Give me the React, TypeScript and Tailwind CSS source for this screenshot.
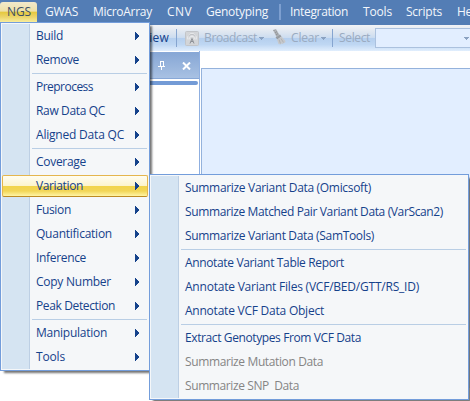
import React from "react";

type Entry = { t: string; w: number; sub?: boolean; on?: boolean; off?: boolean } | null;

const mainMenu: Entry[] = [
  { t: "Build", w: 27, sub: true },
  { t: "Remove", w: 43, sub: true },
  null,
  { t: "Preprocess", w: 57, sub: true },
  { t: "Raw Data QC", w: 69, sub: true },
  { t: "Aligned Data QC", w: 88, sub: true },
  null,
  { t: "Coverage", w: 50, sub: true },
  { t: "Variation", w: 47, sub: true, on: true },
  { t: "Fusion", w: 35, sub: true },
  { t: "Quantification", w: 76, sub: true },
  { t: "Inference", w: 50, sub: true },
  { t: "Copy Number", w: 75, sub: true },
  { t: "Peak Detection", w: 79, sub: true },
  null,
  { t: "Manipulation", w: 71, sub: true },
  { t: "Tools", w: 29, sub: true },
];

const variationMenu: Entry[] = [
  { t: "Summarize Variant Data (Omicsoft)", w: 186 },
  { t: "Summarize Matched Pair Variant Data (VarScan2)", w: 258 },
  { t: "Summarize Variant Data (SamTools)", w: 189 },
  null,
  { t: "Annotate Variant Table Report", w: 159 },
  { t: "Annotate Variant Files (VCF/BED/GTT/RS_ID)", w: 234 },
  { t: "Annotate VCF Data Object", w: 139 },
  null,
  { t: "Extract Genotypes From VCF Data", w: 176 },
  { t: "Summarize Mutation Data", w: 138, off: true },
  { t: "Summarize SNP  Data", w: 114, off: true },
];

/* Text fitted to a fixed advance width. */
function Label({ t, w }: { t: string; w: number }) {
  const ref = React.useRef<HTMLSpanElement>(null);
  const [gap, setGap] = React.useState(0);
  React.useLayoutEffect(() => {
    const fit = () => {
      const el = ref.current;
      if (!el) return;
      el.style.letterSpacing = "0px";
      const g = (w - el.getBoundingClientRect().width) / t.length;
      el.style.letterSpacing = g + "px";
      setGap(g);
    };
    fit();
    document.fonts?.ready.then(fit);
  }, [t, w]);
  return (
    <span ref={ref} className="inline-block whitespace-pre" style={{ letterSpacing: gap }}>
      {t}
    </span>
  );
}

function Menu({ entries }: { entries: Entry[] }) {
  return (
    <div className="border border-[#739ddb] bg-[#f5f7f9] p-px shadow-[3px_3px_2px_-1px_rgba(0,0,0,0.55)]">
      <div className="bg-[linear-gradient(90deg,#d5e4f2_27px,#bdcfe4_27px,#bdcfe4_28px,transparent_28px)] px-px">
        {entries.map((e, i) =>
          e === null ? (
            <div key={i} className="ml-[29px] flex h-[3px] items-center">
              <div className="h-px w-full bg-[#b9cee5]" />
            </div>
          ) : (
            <div
              key={i}
              className={
                "relative flex h-6 items-center justify-between pr-2 pl-[33px] leading-6 " +
                (e.off ? "text-[#858585]" : "text-[#15428b]")
              }
            >
              {e.on && (
                <div className="absolute inset-x-[-1px] top-px bottom-px rounded-[2px] border border-[#e5b64d] border-b-[#bd8b22] bg-[linear-gradient(180deg,#fffdf2_0%,#fcf4cd_48%,#f2d44b_52%,#f2d657_75%,#fff5a5_100%)]" />
              )}
              <span className="relative">
                <Label t={e.t} w={e.w} />
              </span>
              {e.sub && (
                <svg className="relative" width="4" height="8" viewBox="0 0 4 8" fill="#15428b" shapeRendering="crispEdges">
                  <path d="M0 0h1v1h1v1h1v1h1v2h-1v1h-1v1h-1v1h-1z" />
                </svg>
              )}
            </div>
          ),
        )}
      </div>
    </div>
  );
}

const bar = [
  { t: "GWAS", w: 33, c: "ml-[8px]" },
  { t: "MicroArray", w: 59, c: "ml-[15px]" },
  { t: "CNV", w: 25, c: "ml-[15px]" },
  { t: "Genotyping", w: 62, c: "ml-[14px]" },
  { t: "", w: 0, c: "" },
  { t: "Integration", w: 58, c: "ml-[9px]" },
  { t: "Tools", w: 29, c: "ml-[15px]" },
  { t: "Scripts", w: 36, c: "ml-[14px]" },
  { t: "Help", w: 25, c: "ml-[15px]" },
];

function Caret() {
  return (
    <svg className="shrink-0" width="5" height="3" viewBox="0 0 5 3" fill="#8ba2c1" shapeRendering="crispEdges">
      <path d="M0 0h5v1h-1v1h-1v1h-1v-1h-1v-1h-1z" />
    </svg>
  );
}

export default function App() {
  return (
    <div className="relative flex h-[401px] w-[470px] flex-col overflow-hidden bg-white font-['Open_Sans','Noto_Sans',sans-serif] text-[12px] leading-4">
      <div className="flex h-[25px] shrink-0 bg-[#537db5] text-[#f3f7fc]">
        <div className="mt-[2px] flex h-5 w-[37px] shrink-0 items-center rounded-t-[3px] bg-[linear-gradient(180deg,#f1e9cc_0%,#eee1a9_45%,#e6c940_52%,#ecd56a_75%,#f8ed9d_100%)] pl-[7px] text-[#3c4f66]">
          <Label t="NGS" w={24} />
        </div>
        {bar.map((b, i) =>
          b.t ? (
            <span key={i} className={"mt-[4px] shrink-0 " + b.c}>
              <Label t={b.t} w={b.w} />
            </span>
          ) : (
            <span key={i} className="mt-[4px] ml-[11px] h-4 w-[2px] shrink-0 bg-[#7d9fd0]" />
          ),
        )}
      </div>

      <div className="flex h-[26px] shrink-0 items-center bg-[linear-gradient(180deg,#f1f3f6_0%,#dce5f0_30%,#cbdcf0_49%,#b5cfee_51%,#bfd7f3_75%,#e1eefd_100%)] pl-[142px] text-[#9aabc1]">
        <span className="shrink-0 text-[#15428b]"><Label t="View" w={27} /></span>
        <span className="ml-[7px] h-[18px] w-px shrink-0 bg-[#86a5d0]" />
        <svg className="ml-[8px] shrink-0" width="14" height="15" viewBox="0 0 14 15" fill="none">
          <rect x="0.5" y="0.5" width="13" height="14" rx="1" fill="#d3d5d8" stroke="#c2c5c9" />
          <path d="M3 8.5a4.3 4.3 0 1 1 8 0M5 8.5a2.3 2.3 0 1 1 4 0" stroke="#f0f1f3" />
          <path d="M3.2 5.2a4.8 4.8 0 0 1 7.6 0" stroke="#b3b6ba" strokeWidth=".7" />
          <path d="M5 12.5l2-5 2 5M6 10.5h2" stroke="#8c9096" />
        </svg>
        <span className="ml-[5px] shrink-0"><Label t="Broadcast" w={53} /></span>
        <span className="ml-[2px] flex shrink-0"><Caret /></span>
        <svg className="-mt-[2px] ml-[8px] shrink-0" width="14" height="16" viewBox="0 0 14 16">
          <path d="M1 1l3-1 3.5 6-3 2z" fill="#aeb1b5" />
          <path d="M1.5 2l1-1M3 4l2-1.5M4 6l2-1.5" stroke="#898d92" strokeWidth=".8" />
          <path d="M3.5 8.5l4.5-3 1.5 2-4 3z" fill="#989ca1" />
          <path d="M5 10.5l4.5-3 4 4.5-.5 2-2-.5.5 1.5-3-.5.5 1-2.500-.5z" fill="#c6c8cb" />
          <path d="M7 10.500l1.500 4M9 9.500l2.500 4" stroke="#a5a8ac" strokeWidth=".7" />
        </svg>
        <span className="ml-[5px] shrink-0"><Label t="Clear" w={28} /></span>
        <span className="ml-[2px] flex shrink-0"><Caret /></span>
        <span className="ml-[6px] h-[18px] w-px shrink-0 bg-[#86a5d0]" />
        <span className="ml-[6px] shrink-0"><Label t="Select" w={31} /></span>
        <div className="ml-[5px] flex h-5 w-[110px] shrink-0 items-center border border-[#abc1de] bg-[#e2eeff] pl-[88px]">
          <Caret />
        </div>
      </div>

      <div className="flex min-h-0 flex-1">
        <div className="flex h-[123px] w-[200px] shrink-0 flex-col border-r border-[#8fafe0]">
          <div className="mt-px flex h-[27px] items-center justify-end border-y border-[#88a8d7] bg-[linear-gradient(180deg,#87a7d5,#a8c1e3)] pr-[8px]">
            <svg width="8" height="10" viewBox="0 0 8 10" fill="none" stroke="#fff" shapeRendering="crispEdges">
              <path d="M2.5 5V.5H5.5V5M5 0v5M0 5.5h7M3.5 6v3" />
            </svg>
            <svg className="ml-[16px]" width="9" height="8" viewBox="0 0 9 8" stroke="#fff" strokeWidth="2">
              <path d="M1 .5l7 7M8 .5l-7 7" />
            </svg>
          </div>
          <div className="mt-[2px] mr-px h-[4px] rounded-r-sm bg-[#739bd6]" />
        </div>
        <div className="flex flex-1 pt-[17px] pl-px">
          <div className="h-[320px] flex-1 border-t border-l border-[#94b2dc] bg-[#e2eeff]" />
        </div>
      </div>

      <div className="absolute top-[22px] left-0 w-[150px]">
        <Menu entries={mainMenu} />
      </div>
      <div className="absolute top-[174px] left-[149px] w-[320px]">
        <Menu entries={variationMenu} />
      </div>
    </div>
  );
}
